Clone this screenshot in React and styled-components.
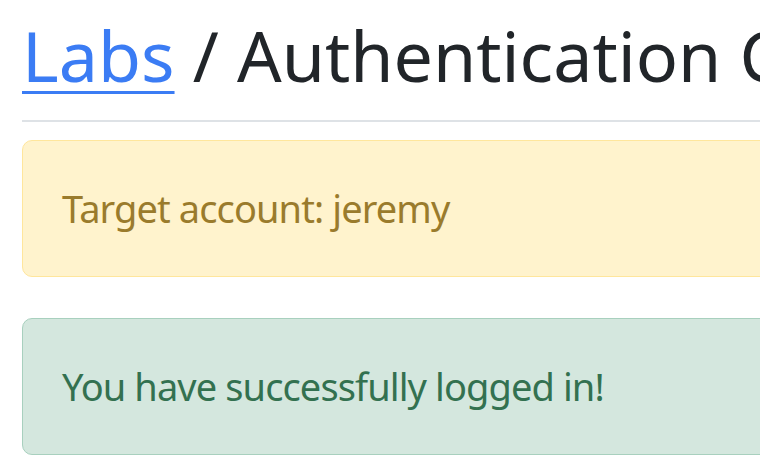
/** node modules */
import styled, { createGlobalStyle } from "styled-components";

/** global styles */
const GlobalStyle = createGlobalStyle`
  html,
  body {
    margin: 0;
    padding: 0;
    overflow: hidden;
    background: #ffffff;
  }

  body {
    font-family: "Noto Sans", "Open Sans", sans-serif;
    color: #212529;
  }
`;

/** inline styles */
const Page = styled.main`
  width: 1100px;
  padding: 13px 0 0 22px;
  box-sizing: border-box;
`;

const Title = styled.h1`
  margin: 0;
  font-size: 70px;
  line-height: 85px;
  font-weight: 400;
  white-space: nowrap;
  color: #212529;
`;

const TitleLink = styled.a`
  color: #3b7cf4;
  text-decoration: underline;
  text-decoration-thickness: 3px;
  text-underline-offset: 9px;
`;

const Divider = styled.hr`
  margin: 22px 0 18px;
  height: 2px;
  border: 0;
  background: #dee2e6;
`;

const AlertStack = styled.div`
  display: flex;
  flex-direction: column;
  gap: 41px;
`;

const variants = {
  warning: { bg: "#fff3cd", border: "#ffe69c", text: "#9a7b2c" },
  success: { bg: "#d4e7de", border: "#a8d0be", text: "#337150" },
};

const Alert = styled.div`
  display: flex;
  align-items: center;
  height: 137px;
  box-sizing: border-box;
  padding: 0 39px;
  border-radius: 10px;
  border: 1px solid ${({ $variant }) => variants[$variant].border};
  background: ${({ $variant }) => variants[$variant].bg};
  color: ${({ $variant }) => variants[$variant].text};
  font-size: 38px;
  letter-spacing: -0.9px;
  line-height: 1.5;
`;

/** render element */
export default function App() {
  return (
    <>
      <GlobalStyle />
      <Page>
        <Title>
          <TitleLink href="#">Labs</TitleLink> / Authentication Challenge
        </Title>
        <Divider />
        <AlertStack>
          <Alert $variant="warning">Target account: jeremy</Alert>
          <Alert $variant="success">You have successfully logged in!</Alert>
        </AlertStack>
      </Page>
    </>
  );
}
